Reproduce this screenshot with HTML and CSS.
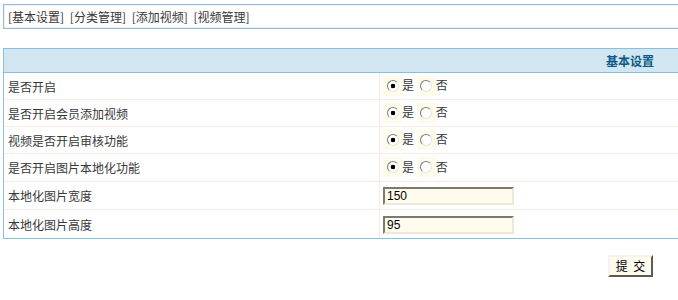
FILE: index.html
```html
<!DOCTYPE html>
<html lang="zh">
<head>
<meta charset="utf-8">
<title>视频设置</title>
<link rel="stylesheet" href="styles.css">
</head>
<body>
<div class="nav"><a href="#">[基本设置]</a> <a href="#">[分类管理]</a> <a href="#">[添加视频]</a> <a href="#">[视频管理]</a></div>
<table class="form">
  <thead>
    <tr><th colspan="2">基本设置</th></tr>
  </thead>
  <tbody>
    <tr class="r">
      <td class="label">是否开启</td>
      <td class="field"><span class="radio"><span class="dot on"></span></span>是 <span class="radio"><span class="dot"></span></span>否</td>
    </tr>
    <tr class="r">
      <td class="label">是否开启会员添加视频</td>
      <td class="field"><span class="radio"><span class="dot on"></span></span>是 <span class="radio"><span class="dot"></span></span>否</td>
    </tr>
    <tr class="r">
      <td class="label">视频是否开启审核功能</td>
      <td class="field"><span class="radio"><span class="dot on"></span></span>是 <span class="radio"><span class="dot"></span></span>否</td>
    </tr>
    <tr class="r r4">
      <td class="label">是否开启图片本地化功能</td>
      <td class="field"><span class="radio"><span class="dot on"></span></span>是 <span class="radio"><span class="dot"></span></span>否</td>
    </tr>
    <tr class="i">
      <td class="label">本地化图片宽度</td>
      <td class="field"><input class="txt" type="text" value="150"></td>
    </tr>
    <tr class="i last">
      <td class="label">本地化图片高度</td>
      <td class="field"><input class="txt" type="text" value="95"></td>
    </tr>
  </tbody>
</table>
<div class="actions"><button class="btn" type="submit">提 交</button></div>
</body>
</html>
```
FILE: styles.css
```css
html, body {
  margin: 0;
  padding: 0;
  overflow: hidden;
  background: #fff;
}
body {
  font: 12px "Noto Sans CJK SC", "Liberation Sans", sans-serif;
  color: #383838;
}
.nav {
  width: 700px;
  height: 23px;
  line-height: 23px;
  margin: 4px 0 0 3px;
  padding-left: 4px;
  border: 1px solid #86c0dc;
  border-right: 0;
  box-shadow: inset 0 0 0 1px #fdeaea;
  white-space: nowrap;
  word-spacing: 3px;
}
.nav a {
  color: #383838;
  text-decoration: none;
}
.form {
  margin: 19px 0 0 3px;
  width: 700px;
  border-collapse: separate;
  border-spacing: 0;
  border-top: 1px solid #86c0dc;
  border-left: 1px solid #86c0dc;
  border-bottom: 1px solid #86c0dc;
}
.form th {
  height: 23px;
  padding: 0 49px 0 0;
  text-align: right;
  background: #d1e6f1;
  border-bottom: 1px solid #86c0dc;
  color: #0b5a8a;
  font-weight: bold;
  font-size: 12px;
}
.form td {
  padding: 0;
  border-bottom: 1px solid #fde8e8;
  vertical-align: middle;
}
.form tr.r td { height: 26px; }
.form tr.r4 td { height: 27px; }
.form tr.i td { height: 27px; }
.form tr.last td { height: 28px; border-bottom: 0; }
.form td.label {
  width: 371px;
  padding-left: 4px;
  border-right: 1px solid #fde8e8;
}
.form td.field {
  padding-left: 3px;
  white-space: nowrap;
}
.radio {
  display: inline-flex;
  align-items: center;
  justify-content: center;
  width: 19px;
  height: 20px;
  background: #fffbea;
  vertical-align: middle;
  margin-top: -2px;
}
.dot {
  box-sizing: border-box;
  width: 12px;
  height: 12px;
  border-radius: 50%;
  border: 1px solid;
  border-color: #7b7b7b #e4e4e4 #e4e4e4 #7b7b7b;
  background: #fff;
}
.dot.on {
  background: radial-gradient(circle, #000 0 2px, #fff 2.6px);
}
.txt {
  box-sizing: border-box;
  width: 131px;
  height: 18px;
  margin: 0;
  padding: 0 2px;
  border: 2px solid;
  border-color: #7c7a6c #ece9d8 #ece9d8 #7c7a6c;
  background: #fffcee;
  font: 12px "Liberation Sans", sans-serif;
  color: #000;
  vertical-align: middle;
}
.actions {
  display: flex;
  justify-content: flex-end;
  padding-right: 25px;
  margin-top: 16px;
}
.btn {
  box-sizing: border-box;
  width: 45px;
  height: 22px;
  margin: 0;
  padding: 0;
  border: 2px solid;
  border-color: #f4f4ec #5e5c50 #5e5c50 #f4f4ec;
  background: #fffbee;
  font: 12px "Noto Sans CJK SC", sans-serif;
  color: #000;
  line-height: 16px;
  word-spacing: 3px;
}
```
